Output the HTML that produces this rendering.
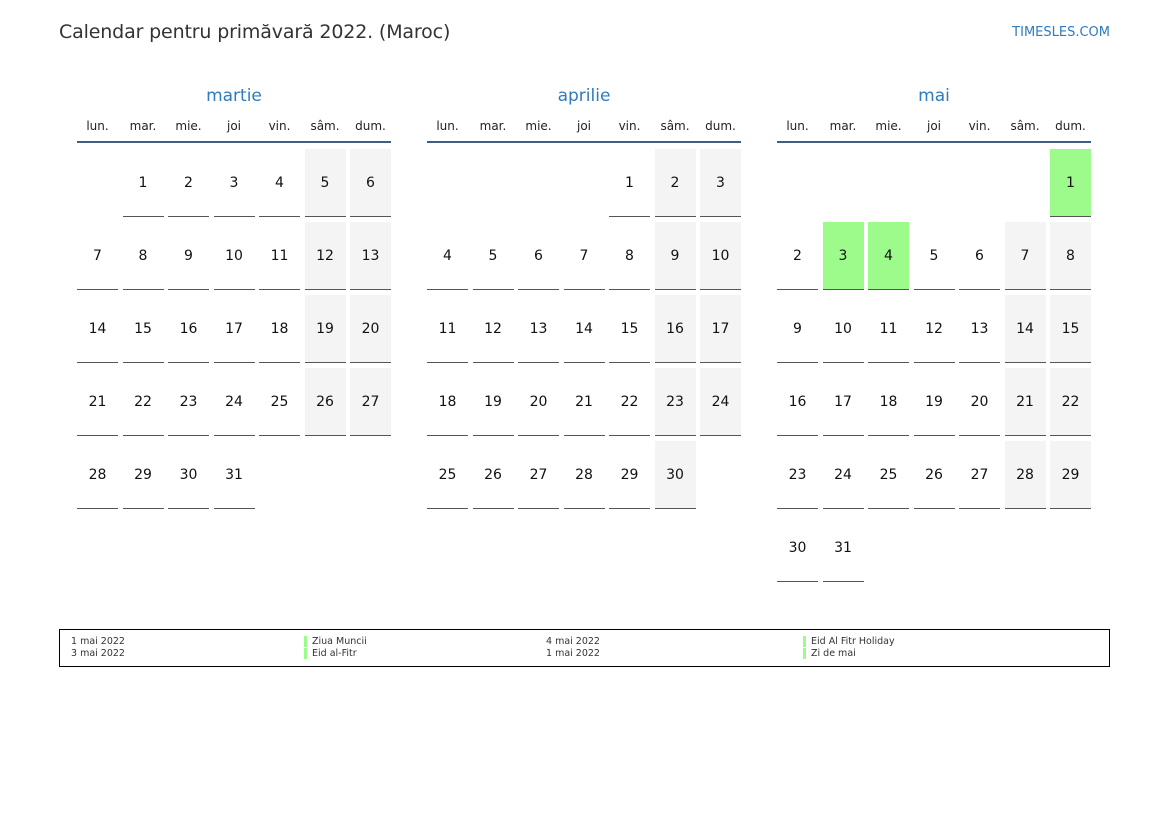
<!DOCTYPE html>
<html><head><meta charset="utf-8"><style>
body{margin:0;width:1169px;height:827px;background:#fff;font-family:"DejaVu Sans","Liberation Sans",sans-serif;position:relative;overflow:hidden}
.t{position:absolute;left:59px;top:21px;font-size:19px;letter-spacing:-0.15px;color:#333}
.s{position:absolute;right:59px;top:25px;font-size:13px;color:#2e7bbf}
.m{position:absolute;top:86px;width:314px}
.mt{text-align:center;font-size:17px;color:#2e7bbf;height:24px}
.dn{display:grid;grid-template-columns:repeat(7,41px);column-gap:4.5px;font-size:12px;color:#222;text-align:center;margin-top:9px;height:22px;border-bottom:2px solid #3d5f86}
.g{display:grid;grid-template-columns:repeat(7,41px);column-gap:4.5px;row-gap:5px;margin-top:6px}
.g div{height:66px;border-bottom:1px solid #555;display:flex;align-items:center;justify-content:center;font-size:14px;color:#111;padding-top:1px;box-sizing:content-box}
.g div.e{border-bottom:1px solid transparent}
.g .w{background:#f4f4f4}
.g .h{background:#9dfb8c}
.lg{position:absolute;left:59px;top:629px;width:1049px;height:36px;border:1px solid #000;font-size:9.5px;color:#333}
.lg span{position:absolute}
.b{border-left:3px solid #9dfb8c;padding-left:5px;line-height:11px}
</style></head><body>
<div class="t">Calendar pentru primăvară 2022. (Maroc)</div>
<div class="s">TIMESLES.COM</div>

<div class="m" style="left:77px"><div class="mt">martie</div>
<div class="dn"><span>lun.</span><span>mar.</span><span>mie.</span><span>joi</span><span>vin.</span><span>sâm.</span><span>dum.</span></div>
<div class="g">
<div class="e"></div><div>1</div><div>2</div><div>3</div><div>4</div><div class="w">5</div><div class="w">6</div>
<div>7</div><div>8</div><div>9</div><div>10</div><div>11</div><div class="w">12</div><div class="w">13</div>
<div>14</div><div>15</div><div>16</div><div>17</div><div>18</div><div class="w">19</div><div class="w">20</div>
<div>21</div><div>22</div><div>23</div><div>24</div><div>25</div><div class="w">26</div><div class="w">27</div>
<div>28</div><div>29</div><div>30</div><div>31</div>
</div></div>

<div class="m" style="left:427px"><div class="mt">aprilie</div>
<div class="dn"><span>lun.</span><span>mar.</span><span>mie.</span><span>joi</span><span>vin.</span><span>sâm.</span><span>dum.</span></div>
<div class="g">
<div class="e"></div><div class="e"></div><div class="e"></div><div class="e"></div><div>1</div><div class="w">2</div><div class="w">3</div>
<div>4</div><div>5</div><div>6</div><div>7</div><div>8</div><div class="w">9</div><div class="w">10</div>
<div>11</div><div>12</div><div>13</div><div>14</div><div>15</div><div class="w">16</div><div class="w">17</div>
<div>18</div><div>19</div><div>20</div><div>21</div><div>22</div><div class="w">23</div><div class="w">24</div>
<div>25</div><div>26</div><div>27</div><div>28</div><div>29</div><div class="w">30</div>
</div></div>

<div class="m" style="left:777px"><div class="mt">mai</div>
<div class="dn"><span>lun.</span><span>mar.</span><span>mie.</span><span>joi</span><span>vin.</span><span>sâm.</span><span>dum.</span></div>
<div class="g">
<div class="e"></div><div class="e"></div><div class="e"></div><div class="e"></div><div class="e"></div><div class="e"></div><div class="h">1</div>
<div>2</div><div class="h">3</div><div class="h">4</div><div>5</div><div>6</div><div class="w">7</div><div class="w">8</div>
<div>9</div><div>10</div><div>11</div><div>12</div><div>13</div><div class="w">14</div><div class="w">15</div>
<div>16</div><div>17</div><div>18</div><div>19</div><div>20</div><div class="w">21</div><div class="w">22</div>
<div>23</div><div>24</div><div>25</div><div>26</div><div>27</div><div class="w">28</div><div class="w">29</div>
<div>30</div><div>31</div>
</div></div>

<div class="lg">
<span style="left:11px;top:6px">1 mai 2022</span>
<span style="left:11px;top:18px">3 mai 2022</span>
<span class="b" style="left:244px;top:6px">Ziua Muncii</span>
<span class="b" style="left:244px;top:18px">Eid al-Fitr</span>
<span style="left:486px;top:6px">4 mai 2022</span>
<span style="left:486px;top:18px">1 mai 2022</span>
<span class="b" style="left:743px;top:6px">Eid Al Fitr Holiday</span>
<span class="b" style="left:743px;top:18px">Zi de mai</span>
</div>
</body></html>
